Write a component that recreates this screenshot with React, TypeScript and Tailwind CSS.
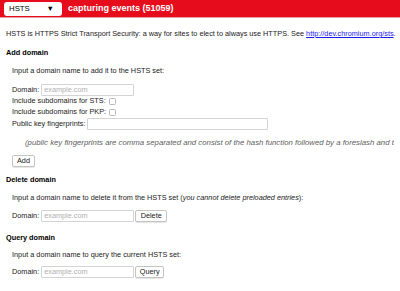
import React from "react";

function TextBox({ width, placeholder }: { width: string; placeholder?: string }) {
  return (
    <div
      className={`${width} h-[12px] border border-[#d4d4d4] rounded-[1px] bg-white flex items-center pl-[2px] text-[#b0b0b0]`}
    >
      {placeholder}
    </div>
  );
}

function Button({ label, width }: { label: string; width: string }) {
  return (
    <div
      className={`${width} h-[12px] border border-[#c4c4c4] rounded-[2px] bg-white flex items-center justify-center text-[#222] shadow-[0_1px_0_#e6e6e6]`}
    >
      {label}
    </div>
  );
}

function DomainRow({ button, buttonWidth, mt }: { button?: string; buttonWidth?: string; mt: string }) {
  return (
    <div className={`${mt} h-[12px] ml-[6px] flex items-center`}>
      <span className="mr-[2px]">Domain:</span>
      <TextBox width="w-[93px]" placeholder="example.com" />
      {button && (
        <div className="ml-[1px]">
          <Button label={button} width={buttonWidth || "w-[30px]"} />
        </div>
      )}
    </div>
  );
}

export default function App() {
  return (
    <div
      className="w-[400px] h-[291px] overflow-hidden bg-white text-[7.3px] text-[#222]"
      style={{ fontFamily: '"Liberation Sans", Arial, sans-serif' }}
    >
      {/* status bar */}
      <div className="h-[18px] bg-[#e60c1c] border-b border-[#e4a4a8] flex items-center pl-[4px]">
        <div className="w-[58px] h-[14px] bg-white rounded-[3px] flex items-center justify-between pl-[5px] pr-[8px] text-[7.8px] text-black">
          <span>HSTS</span>
          <span className="text-[7.5px]">▼</span>
        </div>
        <span className="ml-[6px] text-[9px] font-bold text-white">capturing events (51059)</span>
      </div>

      <div className="px-[6px]">
        <p className="mt-[11px] h-[10px] leading-[10px] whitespace-nowrap">
          HSTS is HTTPS Strict Transport Security: a way for sites to elect to always use HTTPS. See{" "}
          <span className="text-[#1a1aee] underline">http://dev.chromium.org/sts</span>.
        </p>

        <h3 className="mt-[9px] h-[10px] leading-[10px] font-bold text-black">Add domain</h3>
        <p className="mt-[8px] ml-[6px] h-[10px] leading-[10px]">Input a domain name to add it to the HSTS set:</p>

        <DomainRow mt="mt-[8px]" />
        <div className="h-[11px] ml-[6px] flex items-center">
          <span>Include subdomains for STS:</span>
          <span className="ml-[3px] w-[7px] h-[7px] border border-[#b8b8b8] rounded-[1.5px] bg-white" />
        </div>
        <div className="h-[11px] ml-[6px] flex items-center">
          <span>Include subdomains for PKP:</span>
          <span className="ml-[3px] w-[7px] h-[7px] border border-[#b8b8b8] rounded-[1.5px] bg-white" />
        </div>
        <div className="h-[12px] ml-[6px] flex items-center">
          <span className="mr-[2px]">Public key fingerprints:</span>
          <TextBox width="w-[181px]" />
        </div>

        <div className="mt-[8px] ml-[19px] h-[10px] overflow-hidden">
          <p className="leading-[10px] italic text-[7.8px] text-[#606060] whitespace-nowrap">
            (public key fingerprints are comma separated and consist of the hash function followed by a foreslash and the base64 encoded fingerprint)
          </p>
        </div>

        <div className="mt-[7px] ml-[6px]">
          <Button label="Add" width="w-[23px]" />
        </div>

        <h3 className="mt-[8px] h-[10px] leading-[10px] font-bold text-black">Delete domain</h3>
        <p className="mt-[8px] ml-[6px] h-[10px] leading-[10px]">
          Input a domain name to delete it from the HSTS set (<i>you cannot delete preloaded entries</i>):
        </p>
        <DomainRow mt="mt-[7px]" button="Delete" buttonWidth="w-[32px]" />

        <h3 className="mt-[11px] h-[10px] leading-[10px] font-bold text-black">Query domain</h3>
        <p className="mt-[7px] ml-[6px] h-[10px] leading-[10px]">Input a domain name to query the current HSTS set:</p>
        <DomainRow mt="mt-[6px]" button="Query" buttonWidth="w-[29px]" />
      </div>
    </div>
  );
}
